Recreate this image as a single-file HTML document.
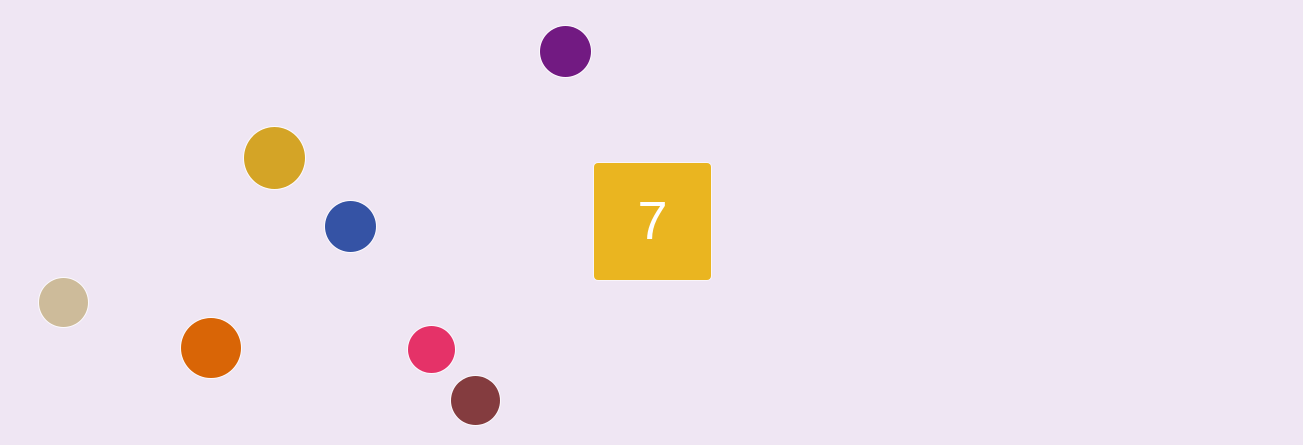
<!DOCTYPE html>
<html><head><style>
html,body{margin:0;padding:0}
body{width:1303px;height:445px;background:#efe6f3;position:relative;overflow:hidden;font-family:"Liberation Sans",sans-serif}
.c{position:absolute;border-radius:50%;box-shadow:0 0 0 1px rgba(255,255,255,0.8)}
.sq{position:absolute;left:594px;top:163px;width:117px;height:117px;background:#eab520;border-radius:4px;box-shadow:0 0 0 1px rgba(255,255,255,0.6);color:#fff;font-size:54px;text-align:center;line-height:117px}
</style></head><body>
<div class="c" style="left:540px;top:26px;width:51px;height:51px;background:#721a82"></div>
<div class="c" style="left:244px;top:127px;width:61px;height:62px;background:#d4a426"></div>
<div class="c" style="left:325px;top:201px;width:51px;height:51px;background:#3553a5"></div>
<div class="c" style="left:39px;top:278px;width:49px;height:49px;background:#cdbb9a"></div>
<div class="c" style="left:181px;top:318px;width:60px;height:60px;background:#d96506"></div>
<div class="c" style="left:408px;top:326px;width:47px;height:47px;background:#e53268"></div>
<div class="c" style="left:451px;top:376px;width:49px;height:49px;background:#843c3f"></div>
<div class="sq">7</div>
</body></html>
